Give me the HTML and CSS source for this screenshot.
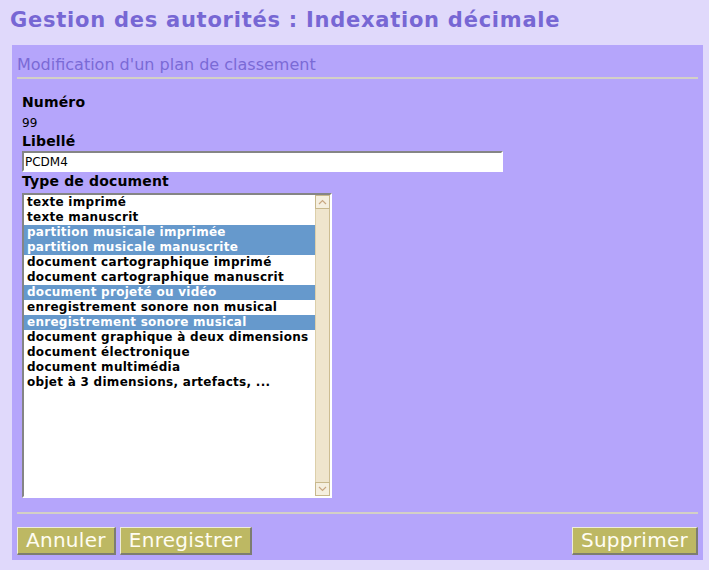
FILE: index.html
```html
<!DOCTYPE html>
<html lang="fr">
<head>
<meta charset="utf-8">
<title>Gestion des autorités : Indexation décimale</title>
<link rel="stylesheet" href="styles.css">
</head>
<body>
<h1 class="page-title">Gestion des autorités : Indexation décimale</h1>
<form class="panel">
  <h2 class="panel-title">Modification d'un plan de classement</h2>
  <hr class="sep">
  <div class="fields">
    <div class="label">Numéro</div>
    <div class="value">99</div>
    <label class="label label-libelle" for="libelle">Libellé</label>
    <input class="text-input" id="libelle" type="text" value="PCDM4">
    <div class="label label-type">Type de document</div>
    <div class="listbox" role="listbox" aria-multiselectable="true">
      <ul class="options">
        <li class="option">texte imprimé</li>
        <li class="option">texte manuscrit</li>
        <li class="option selected">partition musicale imprimée</li>
        <li class="option selected">partition musicale manuscrite</li>
        <li class="option">document cartographique imprimé</li>
        <li class="option">document cartographique manuscrit</li>
        <li class="option selected">document projeté ou vidéo</li>
        <li class="option">enregistrement sonore non musical</li>
        <li class="option selected">enregistrement sonore musical</li>
        <li class="option">document graphique à deux dimensions</li>
        <li class="option">document électronique</li>
        <li class="option">document multimédia</li>
        <li class="option">objet à 3 dimensions, artefacts, ...</li>
      </ul>
      <div class="scrollbar">
        <div class="sb-btn"><svg width="9" height="6" viewBox="0 0 9 6"><polyline points="1,5 4.5,1.5 8,5" fill="none" stroke="#c9a882" stroke-width="1.2"/></svg></div>
        <div class="sb-track"></div>
        <div class="sb-btn"><svg width="9" height="6" viewBox="0 0 9 6"><polyline points="1,1 4.5,4.5 8,1" fill="none" stroke="#c9a882" stroke-width="1.2"/></svg></div>
      </div>
    </div>
  </div>
  <hr class="sep sep-bottom">
  <div class="actions">
    <button type="button" class="btn">Annuler</button>
    <button type="button" class="btn">Enregistrer</button>
    <button type="button" class="btn btn-right">Supprimer</button>
  </div>
</form>
</body>
</html>
```
FILE: styles.css
```css
html, body {
  margin: 0;
  padding: 0;
}
body {
  background: #e0d9fb;
  font-family: "DejaVu Sans", Verdana, sans-serif;
  color: #000;
}
.page-title {
  margin: 8px 0 13px 10px;
  font-size: 21px;
  line-height: 24px;
  letter-spacing: 0.75px;
  font-weight: bold;
  color: #7767d4;
}
.panel {
  margin: 0 6px 10px 12px;
  padding: 10px 5px 5px 5px;
  background: #b5a5fb;
}
.panel-title {
  margin: 0;
  font-size: 16px;
  line-height: 19px;
  font-weight: normal;
  color: #7a6ad6;
}
.sep {
  border: 0;
  height: 2px;
  margin: 3px 0 0 0;
  background: #d3d0c6;
}
.sep-bottom {
  margin-top: 14px;
}
.fields {
  padding: 15px 0 0 5px;
  display: flex;
  flex-direction: column;
  align-items: flex-start;
}
.label {
  display: block;
  font-size: 14px;
  line-height: 17px;
  letter-spacing: 0.15px;
  font-weight: bold;
}
.value {
  margin-top: 5px;
  font-size: 12px;
  line-height: 14px;
}
.label-libelle {
  margin-top: 3px;
}
.text-input {
  margin: 1px 0 0 0;
  box-sizing: border-box;
  width: 481px;
  height: 21px;
  padding: 2px 1px 1px 1px;
  border-style: solid;
  border-width: 2px;
  border-color: #858585 #ffffff #ffffff #858585;
  background: #fff;
  font-family: "DejaVu Sans", Verdana, sans-serif;
  font-size: 12px;
  line-height: 14px;
  color: #000;
  outline: none;
}
.label-type {
  margin-top: 1px;
}
.listbox {
  margin-top: 3px;
  box-sizing: border-box;
  width: 310px;
  height: 305px;
  border-style: solid;
  border-width: 2px;
  border-color: #858585 #ffffff #ffffff #858585;
  background: #fff;
  display: flex;
}
.options {
  flex: 1;
  margin: 0;
  padding: 0;
  list-style: none;
}
.option {
  padding-left: 3px;
  font-size: 12px;
  line-height: 15px;
  letter-spacing: 0.28px;
  font-weight: bold;
  white-space: nowrap;
  color: #000;
}
.option.selected {
  background: #6699cc;
  color: #fff;
}
.scrollbar {
  width: 15px;
  display: flex;
  flex-direction: column;
  background: #efe5cd;
}
.sb-btn {
  box-sizing: border-box;
  height: 14px;
  border: 1px solid #c8b88c;
  background: #f5efdf;
  display: flex;
  align-items: center;
  justify-content: center;
}
.sb-track {
  flex: 1;
  border-left: 1px solid #dccfaa;
  border-right: 1px solid #cdbd92;
}
.actions {
  margin-top: 13px;
  display: flex;
  gap: 4px;
}
.btn {
  margin: 0;
  padding: 1px 8px 1px 8px;
  border-style: solid;
  border-width: 1px 2px 2px 1px;
  border-color: #eeedda #7d7d70 #7d7d70 #eeedda;
  background: #bdb863;
  color: #fffdf2;
  font-family: "DejaVu Sans", Verdana, sans-serif;
  font-size: 20px;
  line-height: 23px;
  letter-spacing: 0.28px;
  cursor: pointer;
}
.btn-right {
  margin-left: auto;
}
```
